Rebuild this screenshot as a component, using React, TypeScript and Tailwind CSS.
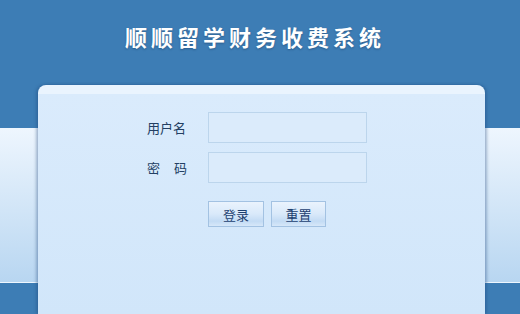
export default function App() {
  return (
    <div className="w-[520px] h-[314px] overflow-hidden bg-[linear-gradient(to_bottom,#3d7db5_0px,#3d7db5_128px,#eef6fe_128px,#b8d6f1_282px,#eef6fe_282px,#eef6fe_283px,#3d7db5_283px)] font-['Noto_Sans_CJK_SC',sans-serif]">
      <div className="h-[85px] pt-[24px] pr-[10px] text-center">
        <h1 className="text-[22px] leading-[24px] font-bold tracking-[4px] text-white [text-shadow:0_1px_2px_rgba(20,50,90,0.45)]">
          顺顺留学财务收费系统
        </h1>
      </div>

      <div className="ml-[38px] w-[447px] h-[229px] rounded-t-[8px] bg-[linear-gradient(to_bottom,#eaf4fe_0px,#eaf4fe_9px,#daebfc_9px,#d1e6fa_100%)] shadow-[-2px_0_3px_rgba(30,70,120,0.35),2px_0_3px_rgba(30,70,120,0.35)] pt-[27px]">
        <div className="flex flex-col gap-[9px] pl-[109px]">
          <div className="flex items-center">
            <span className="w-[40px] text-[13px] leading-none text-[#233f63]">用户名</span>
            <input className="ml-[21px] w-[159px] h-[31px] bg-[#dbebfb] border border-[#bcd5ec] outline-none" />
          </div>
          <div className="flex items-center">
            <span className="w-[40px] flex justify-between text-[13px] leading-none text-[#233f63]">
              <span>密</span>
              <span>码</span>
            </span>
            <input type="password" className="ml-[21px] w-[159px] h-[31px] bg-[#dbebfb] border border-[#bcd5ec] outline-none" />
          </div>
        </div>

        <div className="flex gap-[7px] pl-[170px] mt-[18px]">
          <button className="w-[56px] h-[26px] border border-[#a3c2e2] bg-[linear-gradient(to_bottom,#eaf3fd,#d9e9fa_50%,#c3dbf4_80%,#d6e7f9)] text-[13px] leading-none text-[#1c3f70]">
            登录
          </button>
          <button className="w-[55px] h-[26px] border border-[#a3c2e2] bg-[linear-gradient(to_bottom,#eaf3fd,#d9e9fa_50%,#c3dbf4_80%,#d6e7f9)] text-[13px] leading-none text-[#1c3f70]">
            重置
          </button>
        </div>
      </div>
    </div>
  );
}
